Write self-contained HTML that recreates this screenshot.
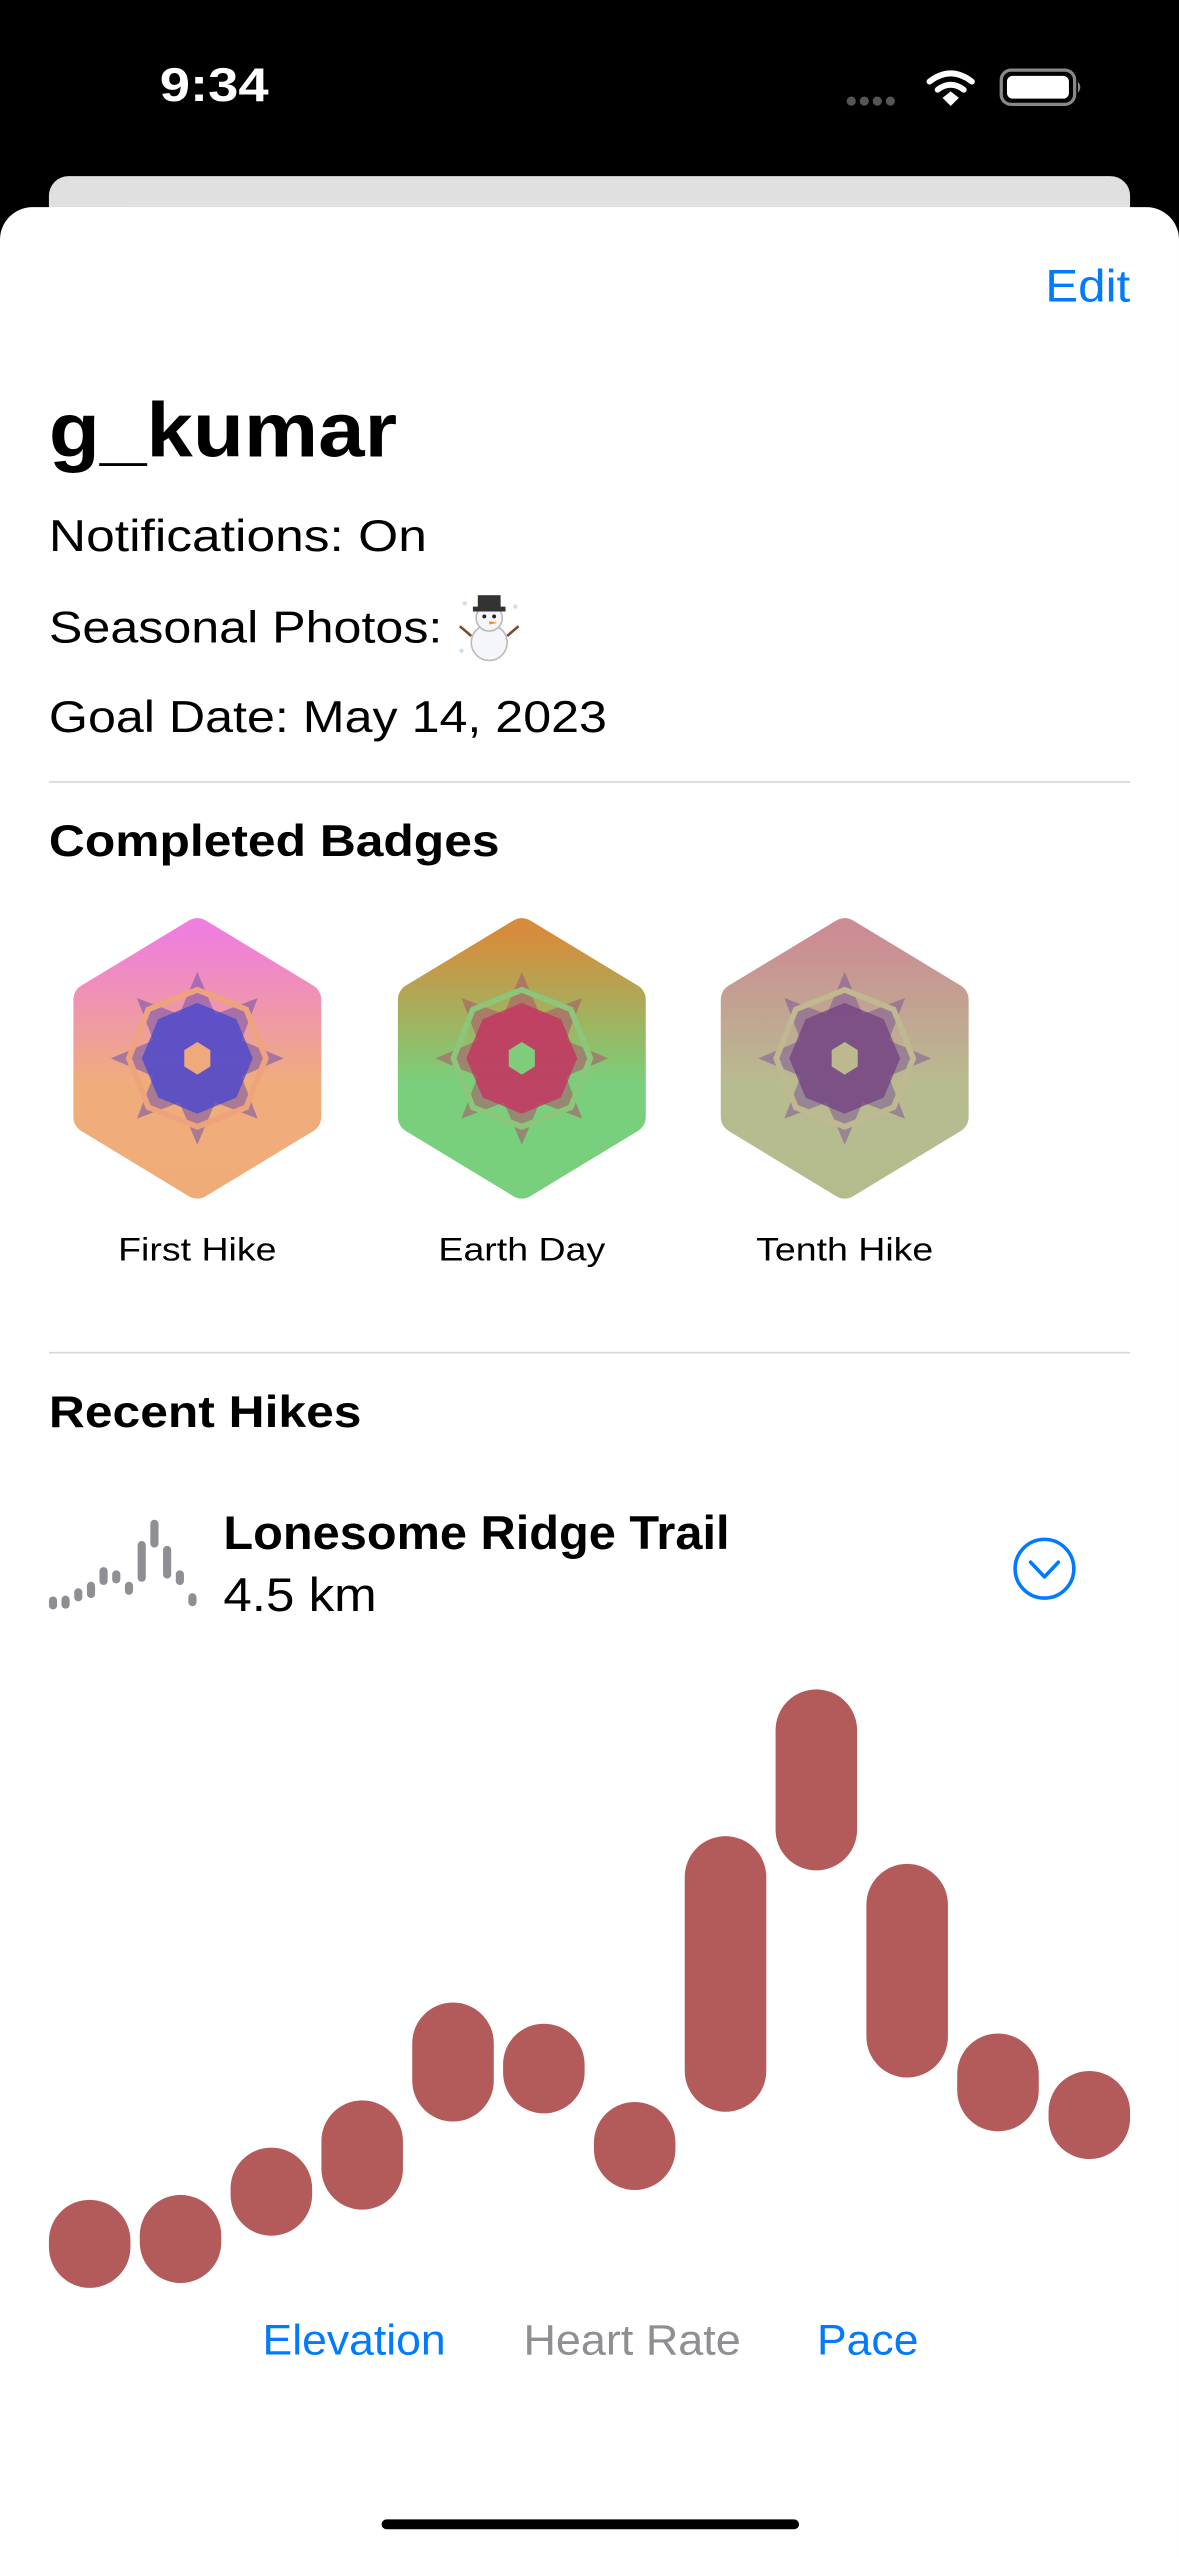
<!DOCTYPE html>
<html><head><meta charset="utf-8">
<style>
html,body{margin:0;padding:0;background:#000;width:1179px;height:2556px;overflow:hidden}
#w{position:absolute;left:0;top:0;width:723px;height:1568px;transform:scale(1.6307);transform-origin:0 0;font-family:"Liberation Sans",sans-serif;background:#000}
.t{position:absolute;white-space:nowrap;color:#000;transform-origin:0 0}
.b{font-size:27px}
.c{transform-origin:50% 0}
</style></head><body>
<div id="w">
<div class="t" style="left:98px;top:37px;font-size:29px;font-weight:bold;color:#fff;transform:scaleX(1.15)">9:34</div>
<svg style="position:absolute;left:515px;top:38px" width="155" height="32" viewBox="0 0 155 32">
<g fill="#555"><circle cx="7" cy="24" r="2.8"/><circle cx="15" cy="24" r="2.8"/><circle cx="23" cy="24" r="2.8"/><circle cx="31" cy="24" r="2.8"/></g>
<g fill="none" stroke="#fff" stroke-width="3.6" stroke-linecap="round"><path d="M55 12 Q68 2 81 12"/><path d="M60 17 Q68 11 76 17"/></g>
<path d="M63 22 L68 18 L73 22 L68 27Z" fill="#fff"/>
<rect x="99" y="5" width="45" height="21" rx="6" fill="none" stroke="#888" stroke-width="2"/>
<rect x="102.5" y="8.5" width="38" height="14" rx="3.5" fill="#fff"/>
<path d="M146 12 Q149 15.5 146 19Z" fill="#888"/>
</svg>
<div style="position:absolute;left:30px;top:108px;width:663px;height:40px;background:#e0e0e0;border-radius:12px"></div>
<div style="position:absolute;left:0;top:127px;width:723px;height:1441px;background:#fff;border-radius:20px 20px 0 0"></div>
<div class="t" style="left:641px;top:160px;font-size:28px;color:#007aff;transform:scaleX(1.08)">Edit</div>
<div class="t" style="left:30px;top:236px;font-size:47px;font-weight:bold;transform:scaleX(1.09)">g_kumar</div>
<div class="t b" style="left:30px;top:314px;transform:scaleX(1.17)">Notifications: On</div>
<div class="t b" style="left:30px;top:370px;transform:scaleX(1.14)">Seasonal Photos:</div>
<svg style="position:absolute;left:280px;top:364px" width="40" height="42" viewBox="0 0 40 42">
<circle cx="20" cy="30" r="11" fill="#f4f6fa" stroke="#bbb"/><circle cx="20" cy="15" r="8" fill="#f4f6fa" stroke="#bbb"/>
<rect x="13" y="1" width="14" height="8" fill="#333"/><rect x="10" y="8" width="20" height="3" fill="#333"/>
<circle cx="17" cy="14" r="1.2" fill="#222"/><circle cx="23" cy="14" r="1.2" fill="#222"/>
<path d="M20 17 l5 1 -5 1z" fill="#f80"/>
<g stroke="#7a4a2a" stroke-width="1.6"><path d="M9 26 L2 20"/><path d="M31 26 L38 20"/></g>
<g fill="#cde"><circle cx="3" cy="35" r="1.3"/><circle cx="36" cy="8" r="1.3"/><circle cx="5" cy="6" r="1.3"/></g>
</svg>
<div class="t b" style="left:30px;top:425px;transform:scaleX(1.14)">Goal Date: May 14, 2023</div>
<div style="position:absolute;left:30px;top:479px;width:663px;height:1px;background:#d6d6d8"></div>
<div class="t b" style="left:30px;top:501px;font-weight:bold;transform:scaleX(1.13)">Completed Badges</div>

<svg style="position:absolute;left:0;top:555px" width="723" height="190" viewBox="0 0 723 190">
<defs>
<linearGradient id="g1" x1="0" y1="0" x2="0" y2="1"><stop offset="0" stop-color="#ef7fdc"/><stop offset=".6" stop-color="#efad7c"/><stop offset="1" stop-color="#f0ac78"/></linearGradient>
<linearGradient id="g2" x1="0" y1="0" x2="0" y2="1"><stop offset="0" stop-color="#d68c3c"/><stop offset=".6" stop-color="#79cf7b"/><stop offset="1" stop-color="#78cf7c"/></linearGradient>
<linearGradient id="g3" x1="0" y1="0" x2="0" y2="1"><stop offset="0" stop-color="#cc8c94"/><stop offset=".6" stop-color="#b8bb90"/><stop offset="1" stop-color="#b4bc8e"/></linearGradient>
<path id="hex" d="M0-76 L66-36 L66 36 L0 76 L-66 36 L-66-36Z"/>
<path id="star" d="M0-53 L11-27 L37-37 L27-11 L53 0 L27 11 L37 37 L11 27 L0 53 L-11 27 L-37 37 L-27 11 L-53 0 L-27-11 L-37-37 L-11-27Z"/>
<path id="oct" d="M0-34 L24-24 L34 0 L24 24 L0 34 L-24 24 L-34 0 L-24-24Z"/>
<path id="ring" d="M0-42 L30-30 L42 0 L30 30 L0 42 L-30 30 L-42 0 L-30-30Z"/>
<path id="hole" d="M0-10 L8-5 L8 5 L0 10 L-8 5 L-8-5Z"/>
</defs>
<g transform="translate(121,94)">
<use href="#hex" fill="url(#g1)" stroke="url(#g1)" stroke-width="20" stroke-linejoin="round"/>
<use href="#star" fill="rgba(110,80,170,.55)"/>
<use href="#oct" fill="rgba(70,70,210,.75)"/>
<use href="#ring" fill="none" stroke="#eea37c" stroke-width="3.5"/>
<use href="#hole" fill="#efa97d"/>
</g>
<g transform="translate(320,94)">
<use href="#hex" fill="url(#g2)" stroke="url(#g2)" stroke-width="20" stroke-linejoin="round"/>
<use href="#star" fill="rgba(170,90,110,.6)"/>
<use href="#oct" fill="rgba(200,45,95,.75)"/>
<use href="#ring" fill="none" stroke="#8cc67a" stroke-width="3.5"/>
<use href="#hole" fill="#7fcd7a"/>
</g>
<g transform="translate(518,94)">
<use href="#hex" fill="url(#g3)" stroke="url(#g3)" stroke-width="20" stroke-linejoin="round"/>
<use href="#star" fill="rgba(120,80,150,.5)"/>
<use href="#oct" fill="rgba(115,65,130,.75)"/>
<use href="#ring" fill="none" stroke="#bfb890" stroke-width="3.5"/>
<use href="#hole" fill="#bcb990"/>
</g>
</svg>
<div class="t c" style="left:21px;width:200px;text-align:center;top:756px;font-size:20px;transform:scaleX(1.15)">First Hike</div>
<div class="t c" style="left:220px;width:200px;text-align:center;top:756px;font-size:20px;transform:scaleX(1.15)">Earth Day</div>
<div class="t c" style="left:418px;width:200px;text-align:center;top:756px;font-size:20px;transform:scaleX(1.15)">Tenth Hike</div>
<div style="position:absolute;left:30px;top:829px;width:663px;height:1px;background:#d6d6d8"></div>
<div class="t b" style="left:30px;top:851px;font-weight:bold;transform:scaleX(1.13)">Recent Hikes</div>

<svg style="position:absolute;left:0;top:0" width="723" height="1568" viewBox="0 0 723 1568">
<g fill="#8e8e93">
<rect x="30" y="979" width="5" height="8" rx="2.5"/><rect x="37.7" y="978.5" width="5" height="8" rx="2.5"/><rect x="45.5" y="974" width="5" height="8" rx="2.5"/><rect x="53.3" y="970" width="5" height="10" rx="2.5"/><rect x="61" y="961" width="5" height="11" rx="2.5"/><rect x="68.8" y="963" width="5" height="8" rx="2.5"/><rect x="76.6" y="970" width="5" height="8" rx="2.5"/><rect x="84.4" y="945" width="5" height="25" rx="2.5"/><rect x="92.2" y="932" width="5" height="17" rx="2.5"/><rect x="100" y="948" width="5" height="20" rx="2.5"/><rect x="107.8" y="963" width="5" height="9" rx="2.5"/><rect x="115.5" y="977" width="5" height="8" rx="2.5"/>
</g>
<g fill="#b35a5a">
<rect x="30" y="1349" width="50" height="54" rx="25"/>
<rect x="85.7" y="1346" width="50" height="54" rx="25"/>
<rect x="141.4" y="1317" width="50" height="54" rx="25"/>
<rect x="197.1" y="1288" width="50" height="67" rx="25"/>
<rect x="252.8" y="1228" width="50" height="73" rx="25"/>
<rect x="308.5" y="1241" width="50" height="55" rx="25"/>
<rect x="364.2" y="1289" width="50" height="54" rx="25"/>
<rect x="419.9" y="1126" width="50" height="169" rx="25"/>
<rect x="475.6" y="1036" width="50" height="111" rx="25"/>
<rect x="531.3" y="1143" width="50" height="131" rx="25"/>
<rect x="587" y="1247" width="50" height="60" rx="25"/>
<rect x="643" y="1270" width="50" height="54" rx="25"/>
</g>
<circle cx="640.5" cy="962" r="18" fill="none" stroke="#007aff" stroke-width="2.2"/>
<path d="M632 958 L640.5 967 L649 958" fill="none" stroke="#007aff" stroke-width="2.2" stroke-linecap="round" stroke-linejoin="round"/>
<rect x="234" y="1545" width="256" height="6" rx="3" fill="#000"/>
</svg>
<div class="t" style="left:137px;top:925px;font-size:29px;font-weight:bold;transform:scaleX(1.03)">Lonesome Ridge Trail</div>
<div class="t" style="left:137px;top:963px;font-size:29px;transform:scaleX(1.08)">4.5 km</div>
<div class="t" style="left:161px;top:1420px;font-size:26px;color:#007aff;transform:scaleX(1.05)">Elevation</div>
<div class="t" style="left:321px;top:1420px;font-size:26px;color:#8e8e93;transform:scaleX(1.06)">Heart Rate</div>
<div class="t" style="left:501px;top:1420px;font-size:26px;color:#007aff;transform:scaleX(1.05)">Pace</div>
</div>
</body></html>
